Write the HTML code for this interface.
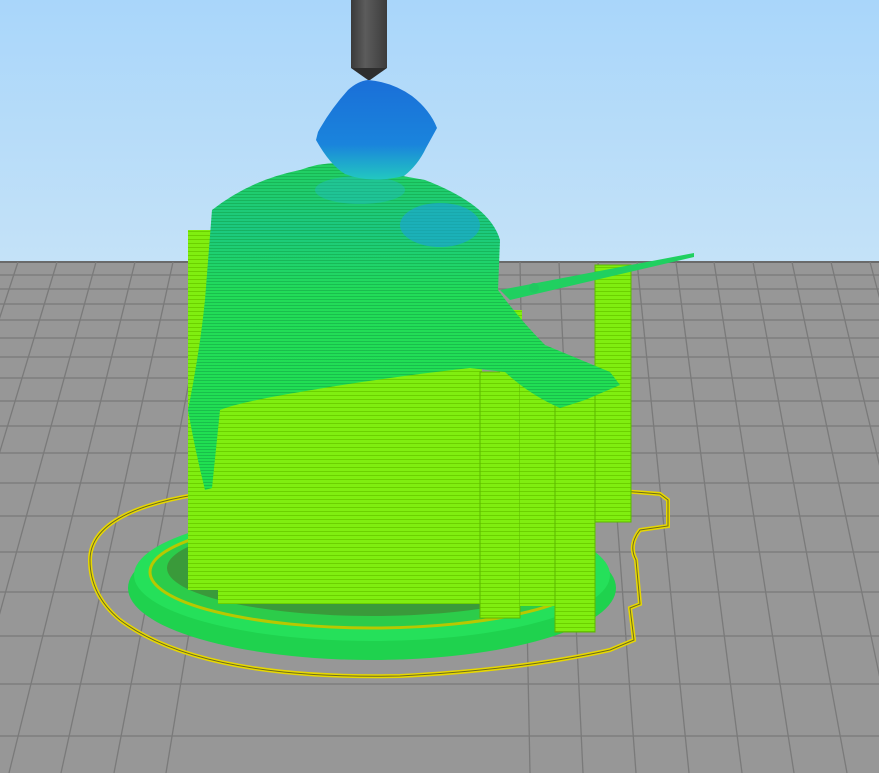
<!DOCTYPE html>
<html><head><style>
html,body{margin:0;padding:0;width:879px;height:773px;overflow:hidden;background:#b8dcf8}
</style></head><body>
<svg width="879" height="773" viewBox="0 0 879 773" xmlns="http://www.w3.org/2000/svg">
<defs>
<linearGradient id="sky" x1="0" y1="0" x2="0" y2="1"><stop offset="0" stop-color="#a9d6fa"/><stop offset="1" stop-color="#c4e2f8"/></linearGradient>
<linearGradient id="hood" x1="0" y1="0" x2="0" y2="1"><stop offset="0" stop-color="#1a6fd8"/><stop offset="0.65" stop-color="#1a84dc"/><stop offset="1" stop-color="#22c8c0"/></linearGradient>
<linearGradient id="cloak" x1="0" y1="0" x2="0" y2="1"><stop offset="0" stop-color="#22d060"/><stop offset="0.2" stop-color="#1cc880"/><stop offset="0.4" stop-color="#22dc58"/><stop offset="1" stop-color="#20e050"/></linearGradient>
<pattern id="stripes" width="4" height="4" patternUnits="userSpaceOnUse"><rect width="4" height="4" fill="#80ee10"/><rect y="3" width="4" height="1" fill="#6cd000"/></pattern>
<pattern id="cstripes" width="4" height="3" patternUnits="userSpaceOnUse"><rect width="4" height="3" fill="none"/><rect y="2" width="4" height="1" fill="#109a40" opacity="0.45"/></pattern>
<linearGradient id="noz" x1="0" y1="0" x2="1" y2="0"><stop offset="0" stop-color="#3a3a3a"/><stop offset="0.4" stop-color="#5c5c5c"/><stop offset="1" stop-color="#3c3c3c"/></linearGradient>
</defs>
<rect width="879" height="262" fill="url(#sky)"/>
<rect y="262" width="879" height="511" fill="#979797"/>
<g stroke="#7a7a7a" stroke-width="1.3">
<line x1="0" y1="262" x2="879" y2="262" stroke="#6a6a6a" stroke-width="2"/>
<line x1="0" y1="275" x2="879" y2="275"/><line x1="0" y1="289" x2="879" y2="289"/>
<line x1="0" y1="304" x2="879" y2="304"/><line x1="0" y1="320" x2="879" y2="320"/>
<line x1="0" y1="338" x2="879" y2="338"/><line x1="0" y1="357" x2="879" y2="357"/>
<line x1="0" y1="378" x2="879" y2="378"/><line x1="0" y1="401" x2="879" y2="401"/>
<line x1="0" y1="426" x2="879" y2="426"/><line x1="0" y1="453" x2="879" y2="453"/>
<line x1="0" y1="483" x2="879" y2="483"/><line x1="0" y1="516" x2="879" y2="516"/>
<line x1="0" y1="552" x2="879" y2="552"/><line x1="0" y1="592" x2="879" y2="592"/>
<line x1="0" y1="636" x2="879" y2="636"/><line x1="0" y1="684" x2="879" y2="684"/>
<line x1="0" y1="736" x2="879" y2="736"/>
<line x1="18" y1="262" x2="-150" y2="773"/><line x1="57" y1="262" x2="-97" y2="773"/>
<line x1="96" y1="262" x2="-44" y2="773"/><line x1="135" y1="262" x2="9" y2="773"/>
<line x1="173" y1="262" x2="61" y2="773"/><line x1="212" y1="262" x2="114" y2="773"/>
<line x1="250" y1="262" x2="166" y2="773"/><line x1="520" y1="262" x2="530" y2="773"/>
<line x1="559" y1="262" x2="583" y2="773"/><line x1="598" y1="262" x2="636" y2="773"/>
<line x1="637" y1="262" x2="689" y2="773"/><line x1="676" y1="262" x2="742" y2="773"/>
<line x1="714" y1="262" x2="794" y2="773"/><line x1="753" y1="262" x2="847" y2="773"/>
<line x1="792" y1="262" x2="900" y2="773"/><line x1="831" y1="262" x2="953" y2="773"/>
<line x1="870" y1="262" x2="1006" y2="773"/>
</g>
<!-- skirt -->
<path d="M90,560 C90,510 180,490 280,488 L610,490 L660,494 L668,500 L668,526 L640,530 Q628,545 636,560 L640,604 L630,608 L634,640 L610,650 Q520,670 400,676 Q200,680 120,620 Q90,595 90,560Z" fill="none" stroke="#e8d800" stroke-width="4"/>
<path d="M90,560 C90,510 180,490 280,488 L610,490 L660,494 L668,500 L668,526 L640,530 Q628,545 636,560 L640,604 L630,608 L634,640 L610,650 Q520,670 400,676 Q200,680 120,620 Q90,595 90,560Z" fill="none" stroke="#6a6a20" stroke-width="1"/>
<!-- base -->
<ellipse cx="372" cy="588" rx="244" ry="72" fill="#1fd24e"/>
<ellipse cx="372" cy="575" rx="238" ry="66" fill="#25e05a"/>
<ellipse cx="372" cy="572" rx="222" ry="56" fill="#2ccc4a" stroke="#b8c800" stroke-width="3"/>
<ellipse cx="372" cy="568" rx="205" ry="48" fill="#3a9a3a"/>
<!-- support blocks -->
<rect x="188" y="230" width="34" height="360" fill="url(#stripes)"/>
<rect x="218" y="368" width="264" height="236" fill="url(#stripes)"/>
<rect x="480" y="372" width="40" height="246" fill="url(#stripes)" stroke="#5cb800" stroke-width="1"/>
<rect x="520" y="380" width="36" height="226" fill="url(#stripes)"/>
<rect x="555" y="390" width="40" height="242" fill="url(#stripes)" stroke="#5cb800" stroke-width="1"/>
<rect x="595" y="265" width="36" height="257" fill="url(#stripes)" stroke="#5cb800" stroke-width="1"/>
<rect x="500" y="310" width="22" height="70" fill="url(#stripes)"/>
<!-- sword -->
<path d="M500,290 L694,253 L694,257 L510,300Z" fill="#20d060"/>
<circle cx="534" cy="288" r="5" fill="#20c860"/>
<!-- cloak -->
<path d="M300,170 Q340,155 380,172 L425,180 Q490,205 500,240 L498,290 Q520,320 545,345 L610,372 L620,385 L585,400 L560,408 Q530,395 505,372 L470,368 Q380,378 300,392 Q240,402 220,410 L212,488 L205,490 Q195,450 188,410 Q200,350 205,300 L212,210 Q250,180 300,170Z" fill="url(#cloak)"/>
<path d="M300,170 Q340,155 380,172 L425,180 Q490,205 500,240 L498,290 Q520,320 545,345 L610,372 L620,385 L585,400 L560,408 Q530,395 505,372 L470,368 Q380,378 300,392 Q240,402 220,410 L212,488 L205,490 Q195,450 188,410 Q200,350 205,300 L212,210 Q250,180 300,170Z" fill="url(#cstripes)"/>
<ellipse cx="440" cy="225" rx="40" ry="22" fill="#1aa0e0" opacity="0.6"/>
<ellipse cx="360" cy="190" rx="45" ry="14" fill="#20b8d0" opacity="0.4"/>
<!-- hood -->
<path d="M368,80 Q392,82 412,96 Q430,110 437,128 L426,148 Q418,165 404,176 Q370,184 345,174 Q330,165 316,140 L318,132 Q330,110 348,90 Q358,81 368,80Z" fill="url(#hood)"/>
<!-- nozzle -->
<rect x="351" y="0" width="36" height="68" fill="url(#noz)"/>
<path d="M351,68 L387,68 L370,80 L368,80Z" fill="#2e2e2e"/>
</svg>
</body></html>
